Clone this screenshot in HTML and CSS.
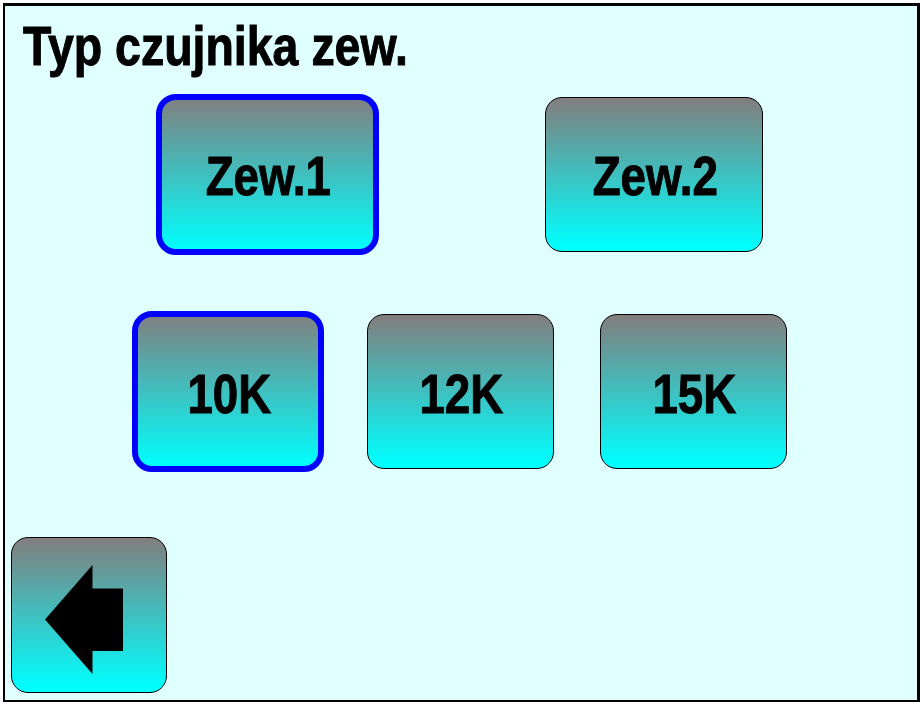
FILE: index.html
```html
<!DOCTYPE html>
<html lang="pl">
<head>
    <meta charset="UTF-8">
    <meta name="viewport" content="width=device-width, initial-scale=1.0">
    <title>Typ czujnika zew.</title>
    <link rel="stylesheet" href="styles.css">
</head>
<body>
    <main class="screen">
        <h1 class="screen-title">Typ czujnika zew.</h1>

        <!-- Sensor selection -->
        <div class="button-row sensor-row">
            <button class="button selected"><span class="label">Zew.1</span></button>
            <button class="button"><span class="label">Zew.2</span></button>
        </div>

        <!-- Sensor type -->
        <div class="button-row type-row">
            <button class="button selected"><span class="label">10K</span></button>
            <button class="button"><span class="label">12K</span></button>
            <button class="button"><span class="label">15K</span></button>
        </div>

        <button class="button back-button" aria-label="Wstecz">
            <svg class="back-arrow" width="78" height="109" viewBox="0 0 78 109">
                <path d="M0 54.5 L47.5 0 V23.5 H78 V86 H47.5 V109 Z"/>
            </svg>
        </button>
    </main>
</body>
</html>
```
FILE: styles.css
```css
* {
    margin: 0;
    padding: 0;
    box-sizing: border-box;
}

body {
    font-family: 'Liberation Sans', Arial, sans-serif;
    background-color: white;
    color: black;
    overflow: hidden;
}

.screen {
    display: flex;
    flex-direction: column;
    width: 917px;
    height: 699px;
    margin: 3px;
    padding: 8px 6px 7px;
    background-color: #e0ffff;
    border: solid black;
    border-width: 3px 3px 2px 2px;
}

.screen-title {
    height: 64px;
    padding-left: 12px;
    font-size: 55px;
    font-weight: 700;
    line-height: 64px;
    white-space: nowrap;
    transform: scaleX(0.845);
    transform-origin: 12px 0;
    -webkit-text-stroke: 1px black;
}

/* Buttons */
.button {
    display: flex;
    justify-content: center;
    align-items: center;
    height: 155px;
    border: 1px solid black;
    border-radius: 17px;
    background: linear-gradient(#808080 3%, #00ffff 97%) border-box;
    color: black;
    font-family: inherit;
    font-size: 55px;
    font-weight: 700;
    cursor: pointer;
}

.button.selected {
    height: 161px;
    margin: -3px;
    border: 6px solid #0000ff;
    border-radius: 20px;
}

.label {
    padding: 2px 0 0 2px;
    line-height: 64px;
    white-space: nowrap;
    transform: scaleX(0.83);
    -webkit-text-stroke: 1px black;
}

.button-row {
    display: flex;
}

.sensor-row {
    gap: 169px;
    margin: 19px 0 0 148px;
}

.sensor-row .button {
    width: 218px;
}

.sensor-row .selected {
    width: 223px;
}

.type-row {
    gap: 46px;
    margin: 62px 0 0 124px;
}

.type-row .button {
    width: 187px;
}

.type-row .selected {
    width: 192px;
}

.type-row .label {
    padding-top: 5px;
}

.back-button {
    width: 156px;
    height: 156px;
    margin-top: auto;
}

.back-arrow {
    display: block;
    margin: 8px 10px 0 0;
}
```
